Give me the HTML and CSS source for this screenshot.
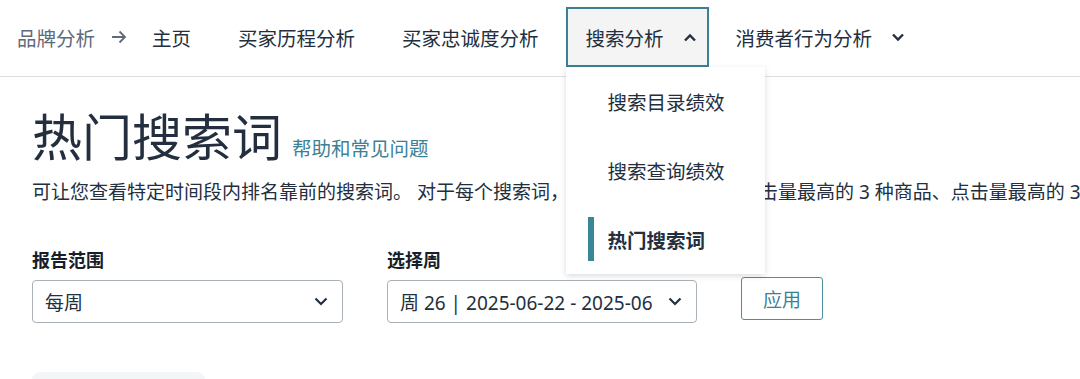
FILE: index.html
```html
<!DOCTYPE html>
<html lang="zh-CN">
<head>
    <meta charset="UTF-8">
    <meta name="viewport" content="width=device-width, initial-scale=1.0">
    <title>热门搜索词</title>
    <link rel="stylesheet" href="styles.css">
</head>
<body>
    <nav class="topnav">
        <span class="crumb">品牌分析</span>
        <span class="crumb-arrow">
            <svg width="16" height="14" viewBox="0 0 16 14"><path d="M1 7h13M8.5 1.5 14 7l-5.5 5.5" fill="none" stroke="#5f6b7a" stroke-width="1.8"/></svg>
        </span>
        <a class="nav-item">主页</a>
        <a class="nav-item">买家历程分析</a>
        <a class="nav-item">买家忠诚度分析</a>
        <div class="nav-item has-menu open">
            搜索分析
            <svg class="caret" width="14" height="9" viewBox="0 0 14 9"><path d="M2 7.5 7 2.5l5 5" fill="none" stroke="#232f3e" stroke-width="2.4"/></svg>
            <div class="menu">
                <a class="menu-item">搜索目录绩效</a>
                <a class="menu-item">搜索查询绩效</a>
                <a class="menu-item active">热门搜索词</a>
            </div>
        </div>
        <div class="nav-item has-menu">
            消费者行为分析
            <svg class="caret" width="14" height="9" viewBox="0 0 14 9"><path d="M2 1.5 7 6.5l5-5" fill="none" stroke="#232f3e" stroke-width="2.4"/></svg>
        </div>
    </nav>

    <main class="page">
        <div class="title-row">
            <h1>热门搜索词</h1>
            <a class="help-link">帮助和常见问题</a>
        </div>
        <p class="desc">可让您查看特定时间段内排名靠前的搜索词。 对于每个搜索词，您可以查看其排名及点击量最高的 3 种商品、点击量最高的 3 种商品的点击份额和转化份额。</p>

        <div class="filters">
            <div class="field field-range">
                <label>报告范围</label>
                <div class="select">
                    <span class="select-value">每周</span>
                    <svg width="14" height="9" viewBox="0 0 14 9"><path d="M1.5 1.5 7 7l5.5-5.5" fill="none" stroke="#232f3e" stroke-width="2.2"/></svg>
                </div>
            </div>
            <div class="field field-week">
                <label>选择周</label>
                <div class="select">
                    <span class="select-value">周 26 | 2025-06-22 - 2025-06-28</span>
                    <svg width="14" height="9" viewBox="0 0 14 9"><path d="M1.5 1.5 7 7l5.5-5.5" fill="none" stroke="#232f3e" stroke-width="2.2"/></svg>
                </div>
            </div>
            <button class="apply">应用</button>
        </div>

        <div class="tabs-stub"></div>
    </main>
</body>
</html>
```

FILE: styles.css
```css
body {
    margin: 0;
    font-family: "Noto Sans", "Noto Sans CJK SC", sans-serif;
    color: #232f3e;
    background: #fff;
    overflow: hidden;
}

.topnav {
    display: flex;
    align-items: center;
    gap: 7px;
    height: 60px;
    padding: 7px 0 9px 17px;
    border-bottom: 1px solid #dcdfe0;
    font-size: 19.5px;
}
.crumb {
    color: #5f6b7a;
}
.crumb-arrow {
    display: flex;
    margin: 0 0 0 9px;
}
.nav-item {
    position: relative;
    display: flex;
    align-items: center;
    height: 56px;
    padding: 0 18px;
    border: 2px solid transparent;
    color: #232f3e;
    white-space: nowrap;
}
.crumb-arrow + .nav-item {
    margin-left: -2px;
}
.nav-item.has-menu {
    padding-right: 10px;
}
.nav-item .caret {
    margin-left: 19px;
}
.nav-item.open {
    border-color: #3a8194;
    background: #f4f4f5;
}

.menu {
    position: absolute;
    top: 58px;
    left: -2px;
    width: 199px;
    background: #fff;
    box-shadow: 0 2px 6px rgba(0, 0, 0, 0.14);
    z-index: 10;
}
.menu-item {
    position: relative;
    display: flex;
    align-items: center;
    height: 69px;
    padding-left: 42px;
    color: #232f3e;
}
.menu-item.active {
    font-weight: bold;
}
.menu-item.active::before {
    content: "";
    position: absolute;
    left: 22px;
    top: 12px;
    width: 6px;
    height: 44px;
    background: #3b8696;
}

.page {
    padding-left: 32px;
}
.title-row {
    display: flex;
    align-items: baseline;
    gap: 10px;
    margin-top: 30px;
}
h1 {
    margin: 0;
    font-size: 50px;
    font-weight: normal;
    line-height: 60px;
}
.help-link {
    font-size: 19.5px;
    color: #3c8196;
}
.desc {
    margin: 12px 0 0;
    font-size: 19px;
    line-height: 26px;
    white-space: nowrap;
}

.filters {
    display: flex;
    align-items: flex-end;
    gap: 44px;
    margin-top: 43px;
}
.field label {
    display: block;
    font-size: 18px;
    font-weight: bold;
    line-height: 24px;
    color: #16202a;
    margin-bottom: 8px;
}
.field-range .select {
    width: 311px;
}
.field-week .select {
    width: 310px;
}
.select {
    display: flex;
    align-items: center;
    box-sizing: border-box;
    height: 43px;
    padding: 0 14px 0 12px;
    border: 1px solid #aab1b6;
    border-radius: 4px;
    font-size: 19px;
}
.select-value {
    flex: 1;
    overflow: hidden;
    white-space: nowrap;
    margin-right: 16px;
}
.apply {
    width: 82px;
    height: 43px;
    margin-bottom: 3px;
    background: #fff;
    border: 1px solid #4a8fa0;
    border-radius: 3px;
    color: #3c8196;
    font-family: inherit;
    font-size: 19px;
}

.tabs-stub {
    width: 173px;
    height: 30px;
    margin-top: 49px;
    background: #f2f6f7;
    border-radius: 8px 8px 0 0;
}
```
